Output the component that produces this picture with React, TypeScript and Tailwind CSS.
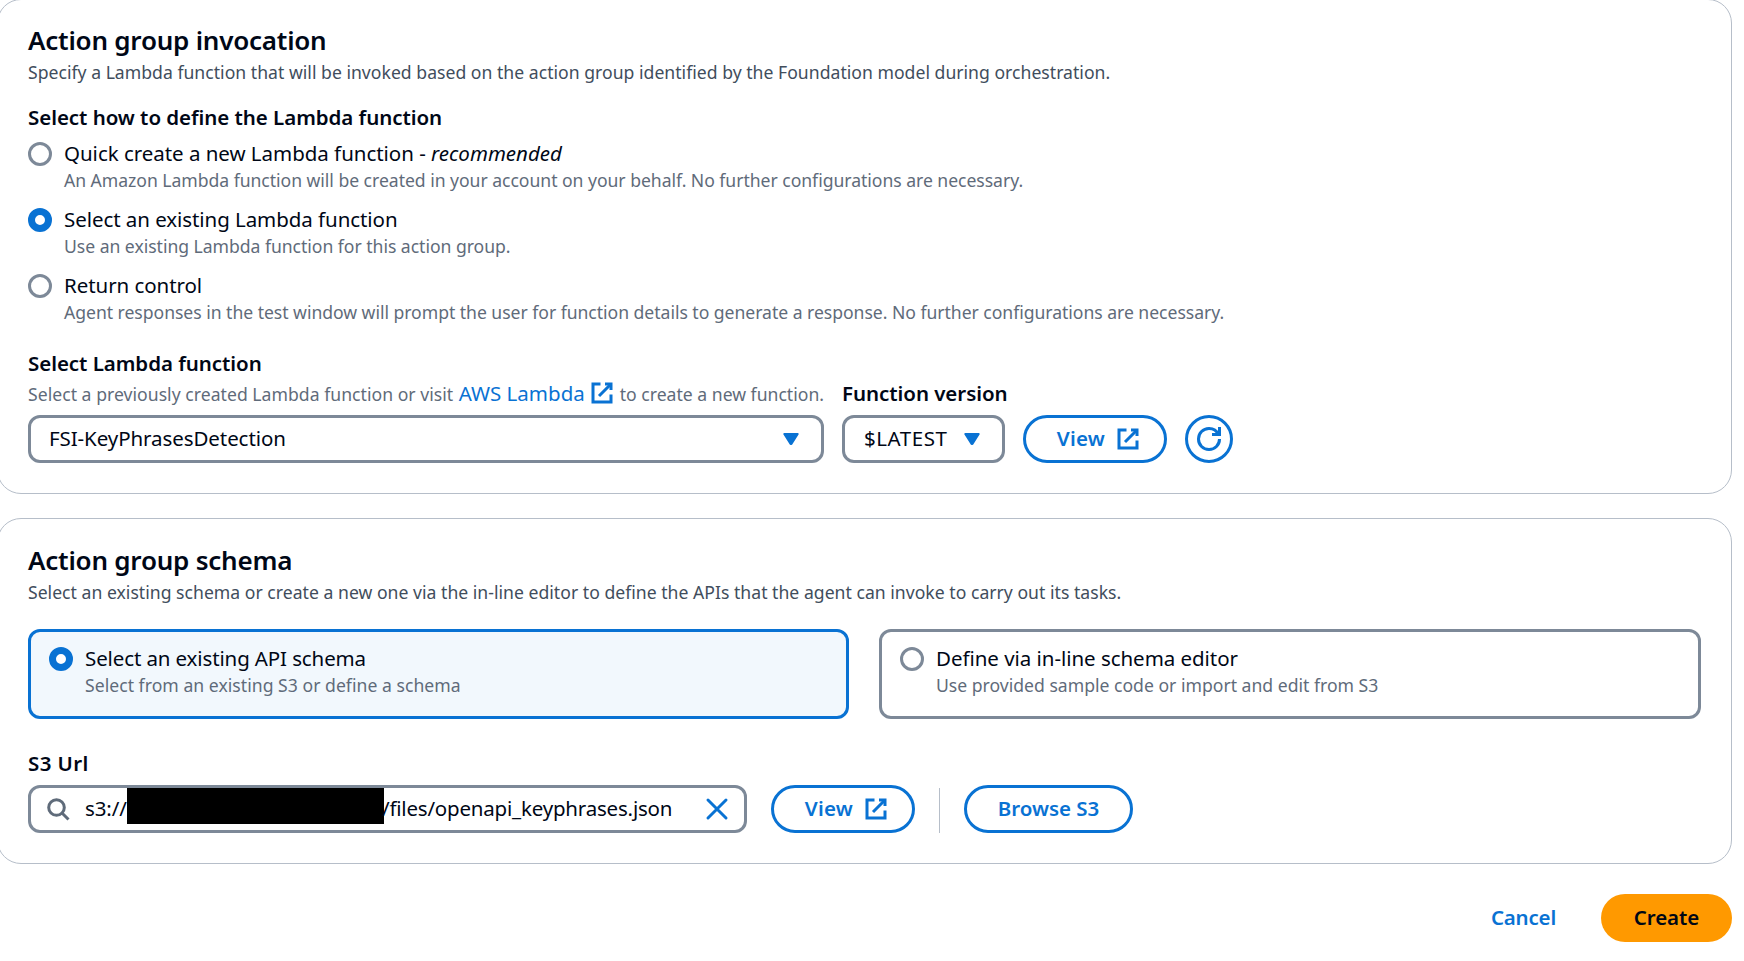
import type { ReactNode } from "react";

const strokeIcon = "block size-6 shrink-0 fill-none stroke-current stroke-2";

function ExternalIcon({ className = "" }: { className?: string }) {
  return (
    <svg viewBox="0 0 16 16" className={`${strokeIcon} ${className}`} aria-hidden="true">
      <path d="M10 2h4v4" />
      <path d="m6 10 8-8" />
      <path d="M14 9.048V14H2V2h5" />
    </svg>
  );
}

function RefreshIcon() {
  return (
    <svg viewBox="0 0 16 16" className={strokeIcon} aria-hidden="true">
      <path d="M10 5h5V0" />
      <path d="M15 8a6.957 6.957 0 0 1-7 7 6.957 6.957 0 0 1-7-7 6.957 6.957 0 0 1 7-7 6.87 6.87 0 0 1 6.3 4" />
    </svg>
  );
}

function SearchIcon() {
  return (
    <svg viewBox="0 0 16 16" className={`${strokeIcon} text-[#5f6b7a]`} aria-hidden="true">
      <circle cx="7" cy="7" r="5.2" />
      <path d="m15 15-4.5-4.5" />
    </svg>
  );
}

function CloseIcon() {
  return (
    <svg viewBox="0 0 16 16" className={`${strokeIcon} text-[#0972d3]`} strokeLinecap="round" aria-hidden="true">
      <path d="m2 2 12 12M14 2 2 14" />
    </svg>
  );
}

function CaretIcon() {
  return (
    <svg viewBox="0 0 16 12" className="block h-3 w-4 shrink-0 fill-[#0972d3] stroke-[#0972d3]" strokeWidth="2" strokeLinejoin="round" aria-hidden="true">
      <path d="M1.3 1h13.4L8.4 11h-.8z" />
    </svg>
  );
}

function Radio({ checked = false }: { checked?: boolean }) {
  return checked ? (
    <span className="size-6 shrink-0 rounded-full border-[7.5px] border-[#0972d3] bg-white" />
  ) : (
    <span className="size-6 shrink-0 rounded-full border-[3px] border-[#7d8998] bg-white" />
  );
}

function Option({ checked, label, children }: { checked?: boolean; label: ReactNode; children: ReactNode }) {
  return (
    <div className="flex gap-3">
      <div className="flex pt-1">
        <Radio checked={checked} />
      </div>
      <div>
        <div className="text-[20.5px] leading-[30px] tracking-[-0.06px]">{label}</div>
        <div className="text-[17.6px] leading-6 tracking-[-0.035px] text-[#5f6b7a]">{children}</div>
      </div>
    </div>
  );
}

function Label({ children }: { children: ReactNode }) {
  return <div className="text-[20.5px] leading-[30px] font-semibold tracking-[-0.05px] whitespace-nowrap">{children}</div>;
}

function Header({ title, children }: { title: string; children: ReactNode }) {
  return (
    <div>
      <h2 className="text-[26px] leading-9 font-semibold tracking-[-0.22px]">{title}</h2>
      <p className="mt-[2px] text-[17.6px] leading-6 tracking-[0.02px] text-[#414d5c]">{children}</p>
    </div>
  );
}

const pill =
  "flex h-12 shrink-0 items-center justify-center rounded-full border-[3px] border-[#0972d3] text-[20.5px] leading-[30px] font-semibold text-[#0972d3]";
const field = "flex h-12 shrink-0 items-center rounded-xl border-[3px] border-[#7d8998] bg-white text-[20.5px] leading-[30px]";

function ViewButton({ className = "" }: { className?: string }) {
  return (
    <button className={`${pill} w-36 justify-end pr-6 ${className}`}>
      <span className="mr-[11px] pb-0.5 tracking-[0.2px]">View</span>
      <ExternalIcon />
    </button>
  );
}

export default function App() {
  return (
    <div className="h-[961px] overflow-hidden bg-white font-['Noto_Sans',sans-serif] text-[#000716]">
      <section className="-mt-px -ml-[3px] h-[495px] w-[1735px] rounded-3xl border border-[#b6bec9] px-[30px] pt-[22px]">
        <Header title="Action group invocation">
          Specify a Lambda function that will be invoked based on the action group identified by the Foundation model during orchestration.
        </Header>

        <div className="mt-[18px]">
          <Label>Select how to define the Lambda function</Label>
        </div>
        <div className="mt-1.5 flex flex-col gap-3">
          <Option
            label={
              <>
                <span className="tracking-[-0.03px]">Quick create a new Lambda function - </span>
                <em className="tracking-[0.02px]">recommended</em>
              </>
            }
          >
            An Amazon Lambda function will be created in your account on your behalf. No further configurations are necessary.
          </Option>
          <Option checked label="Select an existing Lambda function">
            Use an existing Lambda function for this action group.
          </Option>
          <Option label="Return control">
            Agent responses in the test window will prompt the user for function details to generate a response. No further configurations are
            necessary.
          </Option>
        </div>

        <div className="mt-6 flex items-end gap-[18px]">
          <div className="w-[796px] shrink-0">
            <Label>Select Lambda function</Label>
            <div className="flex h-[30px] items-baseline text-[17.6px] leading-[30px] whitespace-nowrap text-[#5f6b7a]">
              <span className="tracking-[0.03px]">Select a previously created Lambda function or visit</span>
              <a className="ml-[5.5px] text-[20.5px] text-[#0972d3]">AWS Lambda</a>
              <ExternalIcon className="ml-[5px] self-center text-[#0972d3]" />
              <span className="ml-1.5">to create a new function.</span>
            </div>
            <div className={`${field} mt-[7px] justify-between pr-[22px] pl-[18px]`}>
              <span className="pb-0.5 tracking-[-0.08px]">FSI-KeyPhrasesDetection</span>
              <CaretIcon />
            </div>
          </div>
          <div className="w-[163px] shrink-0">
            <Label>Function version</Label>
            <div className={`${field} mt-[7px] justify-between pr-[22px] pl-[19px]`}>
              <span className="pb-0.5 tracking-[0.55px]">$LATEST</span>
              <CaretIcon />
            </div>
          </div>
          <ViewButton />
          <button className={`${pill} w-12`} aria-label="Refresh">
            <RefreshIcon />
          </button>
        </div>
      </section>

      <section className="mt-6 -ml-[3px] h-[346px] w-[1735px] rounded-3xl border border-[#b6bec9] px-[30px] pt-[23px]">
        <Header title="Action group schema">
          Select an existing schema or create a new one via the in-line editor to define the APIs that the agent can invoke to carry out its
          tasks.
        </Header>

        <div className="mt-[25px] grid grid-cols-[821px_822px] gap-[30px]">
          <div className="h-[90px] rounded-xl border-[3px] border-[#0972d3] bg-[#f2f8fd] px-[18px] pt-[11px]">
            <Option checked label={<span className="tracking-[-0.12px]">Select an existing API schema</span>}>
              <span className="tracking-[0.03px]">Select from an existing S3 or define a schema</span>
            </Option>
          </div>
          <div className="h-[90px] rounded-xl border-[3px] border-[#7d8998] px-[18px] pt-[11px]">
            <Option label={<span className="tracking-[-0.04px]">Define via in-line schema editor</span>}>
              <span className="tracking-[0px]">Use provided sample code or import and edit from S3</span>
            </Option>
          </div>
        </div>

        <div className="mt-[29px]">
          <Label>
            <span className="tracking-[0.4px]">S3 Url</span>
          </Label>
        </div>
        <div className="mt-[7px] flex items-center">
          <div className={`${field} w-[719px] pr-[15px] pl-[15px]`}>
            <SearchIcon />
            <span className="ml-[15px] w-[42px] pb-0.5 tracking-[-0.1px]">s3://</span>
            <span className="mb-1.5 h-9 w-[257px] shrink-0 bg-black" />
            <span className="-ml-0.5 grow pb-0.5 tracking-[-0.2px]">/files/openapi_keyphrases.json</span>
            <CloseIcon />
          </div>
          <ViewButton className="ml-6" />
          <span className="mt-[3px] ml-6 h-[45px] w-px bg-[#b6bec9]" />
          <button className={`${pill} ml-6 w-[169px] pb-0.5`}>Browse S3</button>
        </div>
      </section>

      <footer className="mt-[30px] flex h-12 w-[1732px] items-center justify-end text-[20.5px] leading-[30px] font-semibold">
        <button className="mr-[45px] pb-0.5 tracking-[-0.2px] text-[#0972d3]">Cancel</button>
        <button className="h-12 w-[131px] rounded-full bg-[#ff9900] pb-0.5 tracking-[-0.1px]">Create</button>
      </footer>
    </div>
  );
}
